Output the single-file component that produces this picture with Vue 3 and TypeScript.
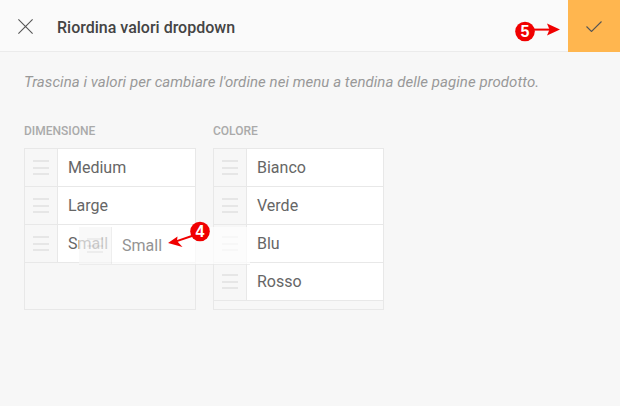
<script setup lang="ts">
interface Column { title: string; values: string[] }
const columns: Column[] = [
  { title: 'DIMENSIONE', values: ['Medium', 'Large', 'Small'] },
  { title: 'COLORE', values: ['Bianco', 'Verde', 'Blu', 'Rosso'] },
]
</script>

<template>
  <div class="page">
    <header class="bar">
      <button class="close" aria-label="Chiudi">
        <svg width="15" height="15" viewBox="0 0 15 15"><path d="M.4.4l14.200 14.200M14.600.4L.4 14.600" stroke="#555" stroke-width="1.1" fill="none" /></svg>
      </button>
      <h1 class="title">Riordina valori dropdown</h1>
      <button class="confirm" aria-label="Conferma">
        <svg width="16" height="11" viewBox="0 0 16 11"><path d="M.5 5.500l5 5L15.500.5" stroke="#555" stroke-width="1.1" fill="none" /></svg>
      </button>
    </header>
    <main class="body">
      <p class="hint">Trascina i valori per cambiare l'ordine nei menu a tendina delle pagine prodotto.</p>
      <div class="columns">
        <section v-for="c in columns" :key="c.title" class="col">
          <h2 class="col-title">{{ c.title }}</h2>
          <ul class="list">
            <li v-for="v in c.values" :key="v" class="row">
              <span class="handle"><i /><i /><i /></span>
              <span class="label">{{ v }}</span>
            </li>
          </ul>
        </section>
      </div>
    </main>

    <div class="ghost">
      <span class="handle"><i /><i /><i /></span>
      <span class="label">Small</span>
    </div>

    <svg class="callouts" width="620" height="406" viewBox="0 0 620 406">
      <g fill="#f00000">
        <path d="M533 28.600h18v2h-18z" />
        <path d="M547 23.500l13 6-13 6 2.500-6z" />
        <circle cx="525" cy="31.500" r="9.800" />
        <path d="M193 234.500l-18 6.200.6 1.900 18-6.200z" />
        <path d="M168 243l9.500-6.500-.5 4.500 5.500 6z" />
        <circle cx="200" cy="231.500" r="9.800" />
      </g>
      <text x="525" y="37" class="num">5</text>
      <text x="200" y="237" class="num">4</text>
    </svg>
  </div>
</template>

<style>
html, body { margin: 0; background: #f7f7f7; }
</style>

<style scoped>
.page {
  position: relative;
  width: 620px;
  height: 406px;
  overflow: hidden;
  background: #f7f7f7;
  font-family: Roboto, sans-serif;
}
.bar {
  display: flex;
  align-items: center;
  height: 51px;
  background: #fafafa;
  border-bottom: 1px solid #ebebeb;
}
.close {
  display: flex;
  align-items: center;
  justify-content: center;
  width: 51px;
  height: 51px;
  padding: 1px 0 0 0;
  margin-right: 6px;
  border: 0;
  background: none;
}
.title {
  flex: 1;
  margin: 0;
  padding-top: 4px;
  font-size: 16px;
  font-weight: 500;
  color: #444;
}
.confirm {
  display: flex;
  align-items: center;
  justify-content: center;
  width: 52px;
  height: 52px;
  margin-bottom: -1px;
  padding: 0;
  border: 0;
  background: #ffb64f;
}
.body { padding: 21px 24px 0; }
.hint {
  margin: 0;
  font-size: 15px;
  line-height: 18px;
  font-style: italic;
  color: #999;
  letter-spacing: .05px;
}
.columns { display: flex; gap: 17px; margin-top: 33px; }
.col { width: 172px; }
.col:last-child { width: 171px; }
.col-title {
  margin: 0 0 10px;
  font-size: 12px;
  line-height: 14px;
  font-weight: 500;
  color: #aaa;
}
.list {
  list-style: none;
  margin: 0;
  padding: 0;
  height: 162px;
  box-sizing: border-box;
  border: 1px solid #e8e8e8;
}
.row {
  display: flex;
  height: 38px;
  box-sizing: border-box;
  border-bottom: 1px solid #e8e8e8;
  background: #fff;
}
.handle {
  display: flex;
  flex-direction: column;
  align-items: center;
  justify-content: center;
  gap: 4.500px;
  width: 32px;
  flex: none;
  background: #f7f7f7;
  border-right: 1px solid #e8e8e8;
}
.handle i {
  display: block;
  width: 16px;
  height: 2px;
  background: #e6e6e6;
}
.label {
  padding-left: 10px;
  font-size: 16px;
  line-height: 37px;
  color: #666;
}
.ghost {
  position: absolute;
  left: 79px;
  top: 227px;
  width: 171px;
  height: 38px;
  display: flex;
  box-sizing: border-box;
  border-bottom: 1px solid #e8e8e8;
  background: #fff;
  opacity: .7;
}
.callouts { position: absolute; left: 0; top: 0; pointer-events: none; }
.num {
  fill: #fff;
  font-family: "Liberation Sans", sans-serif;
  font-size: 16px;
  font-weight: 700;
  text-anchor: middle;
}
</style>
